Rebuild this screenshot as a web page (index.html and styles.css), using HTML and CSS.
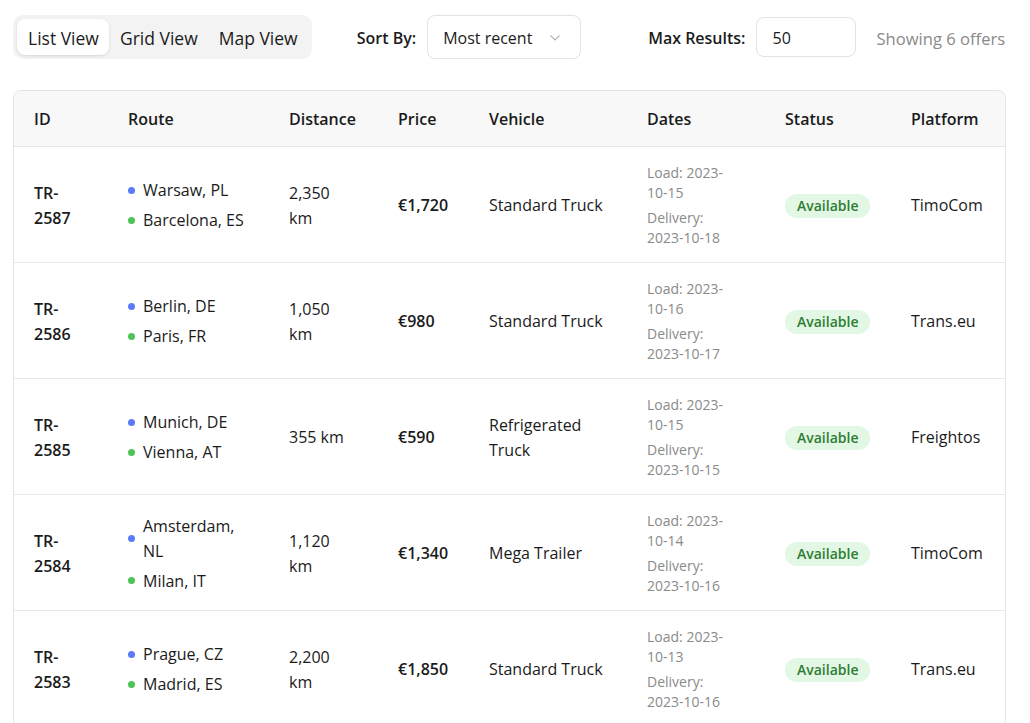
FILE: index.html
```html
<!DOCTYPE html>
<html lang="en">
<head>
<meta charset="utf-8">
<title>Offers</title>
<link rel="stylesheet" href="styles.css">
</head>
<body>
<div class="page">
  <div class="toolbar">
    <div class="views">
      <button class="view active">List View</button>
      <button class="view">Grid View</button>
      <button class="view">Map View</button>
    </div>
    <div class="field sort">
      <span class="label">Sort By:</span>
      <div class="select">
        <span>Most recent</span>
        <svg class="chev" width="12" height="8" viewBox="0 0 12 8"><path d="M1.5 1.5 L6 6 L10.5 1.5" fill="none" stroke="#b5b5b5" stroke-width="1.2"/></svg>
      </div>
    </div>
    <div class="field max">
      <span class="label">Max Results:</span>
      <div class="input">50</div>
    </div>
    <div class="count">Showing 6 offers</div>
  </div>

  <div class="table-wrap">
    <table class="offers">
      <colgroup>
        <col class="c-id"><col class="c-route"><col class="c-dist"><col class="c-price"><col class="c-veh"><col class="c-dates"><col class="c-status"><col class="c-plat">
      </colgroup>
      <thead>
        <tr><th>ID</th><th>Route</th><th>Distance</th><th>Price</th><th>Vehicle</th><th>Dates</th><th>Status</th><th>Platform</th></tr>
      </thead>
      <tbody>
        <tr>
          <td class="id">TR-2587</td>
          <td><div class="route"><div class="stop"><i class="dot from"></i><span>Warsaw, PL</span></div><div class="stop"><i class="dot to"></i><span>Barcelona, ES</span></div></div></td>
          <td><span class="dist">2,350 km</span></td>
          <td class="price">€1,720</td>
          <td>Standard Truck</td>
          <td><div class="dates"><div>Load: 2023-10-15</div><div>Delivery: 2023-10-18</div></div></td>
          <td><span class="badge">Available</span></td>
          <td>TimoCom</td>
        </tr>
        <tr>
          <td class="id">TR-2586</td>
          <td><div class="route"><div class="stop"><i class="dot from"></i><span>Berlin, DE</span></div><div class="stop"><i class="dot to"></i><span>Paris, FR</span></div></div></td>
          <td><span class="dist">1,050 km</span></td>
          <td class="price">€980</td>
          <td>Standard Truck</td>
          <td><div class="dates"><div>Load: 2023-10-16</div><div>Delivery: 2023-10-17</div></div></td>
          <td><span class="badge">Available</span></td>
          <td>Trans.eu</td>
        </tr>
        <tr>
          <td class="id">TR-2585</td>
          <td><div class="route"><div class="stop"><i class="dot from"></i><span>Munich, DE</span></div><div class="stop"><i class="dot to"></i><span>Vienna, AT</span></div></div></td>
          <td><span class="dist">355 km</span></td>
          <td class="price">€590</td>
          <td>Refrigerated Truck</td>
          <td><div class="dates"><div>Load: 2023-10-15</div><div>Delivery: 2023-10-15</div></div></td>
          <td><span class="badge">Available</span></td>
          <td>Freightos</td>
        </tr>
        <tr>
          <td class="id">TR-2584</td>
          <td><div class="route"><div class="stop"><i class="dot from"></i><span>Amsterdam, NL</span></div><div class="stop"><i class="dot to"></i><span>Milan, IT</span></div></div></td>
          <td><span class="dist">1,120 km</span></td>
          <td class="price">€1,340</td>
          <td>Mega Trailer</td>
          <td><div class="dates"><div>Load: 2023-10-14</div><div>Delivery: 2023-10-16</div></div></td>
          <td><span class="badge">Available</span></td>
          <td>TimoCom</td>
        </tr>
        <tr>
          <td class="id">TR-2583</td>
          <td><div class="route"><div class="stop"><i class="dot from"></i><span>Prague, CZ</span></div><div class="stop"><i class="dot to"></i><span>Madrid, ES</span></div></div></td>
          <td><span class="dist">2,200 km</span></td>
          <td class="price">€1,850</td>
          <td>Standard Truck</td>
          <td><div class="dates"><div>Load: 2023-10-13</div><div>Delivery: 2023-10-16</div></div></td>
          <td><span class="badge">Available</span></td>
          <td>Trans.eu</td>
        </tr>
      </tbody>
    </table>
  </div>
</div>
</body>
</html>
```

FILE: styles.css
```css
html, body {
  margin: 0;
  padding: 0;
  background: #ffffff;
  overflow: hidden;
}
body {
  font-family: "Segoe UI", "Open Sans", "Noto Sans", sans-serif;
  font-size: 16px;
  color: #1b1b1b;
}
.page {
  width: 993px;
  padding: 15px 0 0 13px;
}
.toolbar {
  display: flex;
  align-items: center;
  height: 44px;
}
.views {
  display: flex;
  padding: 4px;
  background: #f3f3f3;
  border-radius: 10px;
  height: 44px;
  box-sizing: border-box;
}
.view {
  font: inherit;
  font-size: 17.5px;
  font-weight: 500;
  color: #1b1b1b;
  border: 0;
  background: transparent;
  padding: 2px 10px 0 11px;
  border-radius: 8px;
  height: 36px;
  cursor: pointer;
}
.view.active {
  background: #ffffff;
  box-shadow: 0 1px 3px rgba(0,0,0,0.12);
}
.field {
  display: flex;
  align-items: center;
  gap: 11px;
}
.label {
  font-weight: 600;
  padding-top: 2px;
}
.sort { margin-left: 45px; }
.max { margin-left: 67px; }
.select {
  display: flex;
  align-items: center;
  justify-content: space-between;
  box-sizing: border-box;
  width: 154px;
  height: 44px;
  padding: 2px 19px 0 15px;
  border: 1px solid #e2e2e2;
  border-radius: 8px;
  background: #fff;
}
.chev { margin-top: -1px; }
.input {
  display: flex;
  align-items: center;
  box-sizing: border-box;
  width: 100px;
  height: 40px;
  padding: 2px 15px 0;
  border: 1px solid #e2e2e2;
  border-radius: 8px;
  background: #fff;
}
.count {
  margin-left: 20px;
  padding-top: 2px;
  font-size: 16.6px;
  color: #8a8a8a;
  white-space: nowrap;
}
.table-wrap {
  margin-top: 31px;
  border: 1px solid #e5e5e5;
  border-radius: 8px;
  overflow: hidden;
}
.offers {
  width: 100%;
  border-collapse: collapse;
  table-layout: fixed;
}
.c-id { width: 94px; }
.c-route { width: 161px; }
.c-dist { width: 109px; }
.c-price { width: 91px; }
.c-veh { width: 158px; }
.c-dates { width: 138px; }
.c-status { width: 126px; }
.c-plat { width: auto; }
th, td {
  text-align: left;
  padding: 16px 20px 14px;
  line-height: 25px;
  vertical-align: middle;
}
th {
  font-weight: 600;
  background: #f8f8f8;
  border-bottom: 1px solid #e5e5e5;
}
td {
  border-bottom: 1px solid #e8e8e8;
}
tbody tr:last-child td { border-bottom: 0; }
.id, .price { font-weight: 600; }
.dist {
  display: inline-block;
  max-width: 58px;
}
.route {
  display: flex;
  flex-direction: column;
  gap: 5px;
}
.stop {
  display: flex;
  align-items: center;
  gap: 8px;
}
.dot {
  flex: none;
  width: 7px;
  height: 7px;
  border-radius: 50%;
  margin-top: -1px;
}
.dot.from { background: #5a7cf6; }
.dot.to { background: #4cc45a; }
.dates {
  display: flex;
  flex-direction: column;
  gap: 5px;
  max-width: 82px;
  font-size: 14px;
  line-height: 20px;
  color: #8a8a8a;
}
.badge {
  display: inline-block;
  padding: 1px 12px 2px;
  border-radius: 12px;
  background: #e3f7e5;
  color: #2e7d32;
  font-size: 14px;
  font-weight: 600;
  line-height: 21px;
}
```
